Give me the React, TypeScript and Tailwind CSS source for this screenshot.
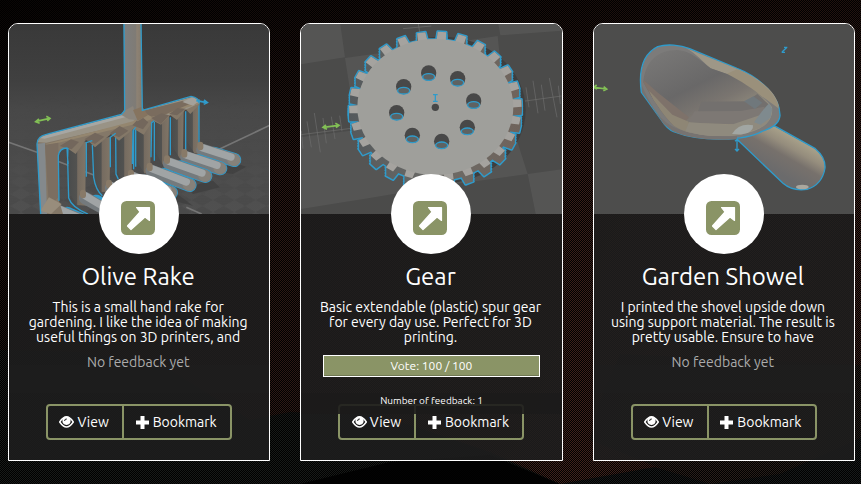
import type { ReactNode } from "react";

const BLUE = "#2f9bcb";

function gearPath(dy: number): string {
  const teeth = 26;
  const step = (Math.PI * 2) / teeth;
  const phase = (-85.6 * Math.PI) / 180;
  const point = (angle: number, scale: number) =>
    `${(437 + 259 * scale * Math.cos(angle)).toFixed(1)} ${(277 + 224 * scale * Math.sin(angle) + dy).toFixed(1)}`;
  const parts: string[] = [];
  for (let i = 0; i < teeth; i++) {
    const a = phase + i * step;
    parts.push(point(a - step * 0.25, 0.895), point(a - step * 0.2, 1), point(a + step * 0.2, 1), point(a + step * 0.25, 0.895));
  }
  return `M${parts.join("L")}Z`;
}

const holes = [
  [417, 177], [504, 194], [552, 261], [533, 340], [456, 382], [368, 364], [321, 296], [342, 218],
];

function Scene({ label, left, children }: { label: string; left: number; children: ReactNode }) {
  return (
    <svg role="img" aria-label={label} viewBox={`${left} 30 783 570`} preserveAspectRatio="xMidYMid slice" className="block h-[190px] w-full">
      {children}
    </svg>
  );
}

function RakeScene() {
  const tines = [
    { x: 205, y: 395, w: 54, b: 545 },
    { x: 278, y: 380, w: 54, b: 505 },
    { x: 348, y: 355, w: 50, b: 480 },
    { x: 408, y: 335, w: 46, b: 450 },
    { x: 464, y: 315, w: 44, b: 425 },
    { x: 514, y: 300, w: 38, b: 405 },
    { x: 558, y: 280, w: 40, b: 390 },
  ];
  const prongs = [
    [608, 408, 704, 438],
    [560, 430, 662, 463],
    [508, 449, 617, 486],
    [456, 471, 570, 513],
    [400, 492, 514, 536],
    [334, 522, 430, 575],
    [256, 552, 360, 610],
    [168, 588, 260, 625],
  ];
  return (
    <Scene label="Olive rake model" left={27}>
      <defs>
        <linearGradient id="rakeSky" x1="0" y1="0" x2="0" y2="1">
          <stop offset="0" stopColor="#393939" />
          <stop offset="0.3" stopColor="#404040" />
          <stop offset="0.45" stopColor="#484848" />
          <stop offset="1" stopColor="#505050" />
        </linearGradient>
        <linearGradient id="rakePole" x1="0" y1="0" x2="1" y2="0">
          <stop offset="0" stopColor="#7d7f80" />
          <stop offset="0.5" stopColor="#7f7b75" />
          <stop offset="0.55" stopColor="#8d8274" />
          <stop offset="1" stopColor="#7b7062" />
        </linearGradient>
        <linearGradient id="rakeTine" x1="0" y1="0" x2="1" y2="0">
          <stop offset="0" stopColor="#4a4c4c" />
          <stop offset="0.46" stopColor="#525250" />
          <stop offset="0.5" stopColor="#756b60" />
          <stop offset="1" stopColor="#827768" />
        </linearGradient>
        <pattern id="rakeFloor" width="64" height="36" patternUnits="userSpaceOnUse">
          <path d="M0 18L32 0L64 18L32 36Z" fill="#4a4a4a" />
        </pattern>
        <linearGradient id="floorFade" x1="0" y1="0" x2="0" y2="1">
          <stop offset="0.38" stopColor="#000" />
          <stop offset="1" stopColor="#fff" />
        </linearGradient>
        <mask id="floorMask"><rect x="27" y="30" width="783" height="570" fill="url(#floorFade)" /></mask>
      </defs>
      <rect x="27" y="30" width="783" height="570" fill="url(#rakeSky)" />
      <rect x="27" y="30" width="783" height="570" fill="url(#rakeFloor)" mask="url(#floorMask)" />
      <path d="M27 385L112 415M170 440L300 490M810 334L660 405M560 580L606 600" stroke="#757575" strokeWidth="5" />
      <path d="M620 420L740 458L700 480L640 470ZM580 540L660 520L640 500L560 520ZM440 470L520 560L580 575Z" fill="#3d3d3d" opacity=".7" />
      {tines.map((t) => (
        <path key={t.x} d={`M${t.x} ${t.y + 22}Q${t.x + 4} ${t.y} ${t.x + t.w} ${t.y - 12}L${t.x + t.w - 2} ${t.b}L${t.x + t.w + 4} ${t.b + 30}L${t.x + 26} ${t.b + 28}L${t.x + 3} ${t.b - 10}Z`} fill="url(#rakeTine)" />
      ))}
      <path d="M204 440L207 552Q216 580 265 600M278 392L282 490Q288 528 308 545M348 366L349 480L356 496M402 346V466M408 346V458M464 324V440M512 310V424M558 292V412M598 256V392" fill="none" stroke={BLUE} strokeWidth="4" />
      {prongs.map(([x1, y1, x2, y2]) => (
        <g key={x1} strokeLinecap="round" fill="none">
          <path d={`M${x1 + 34} ${y1 + 11}L${x2} ${y2}`} stroke={BLUE} strokeWidth="42" />
          <path d={`M${x1} ${y1}L${x2} ${y2}`} stroke="#747a7d" strokeWidth="37" />
          <path d={`M${x2 - 4} ${y2 - 2}L${x2} ${y2}`} stroke="#85817a" strokeWidth="35" />
          <path d={`M${x1} ${y1 - 7}L${x2 - 10} ${y2 - 9}`} stroke="#a0a4a5" strokeWidth="22" />
          <path d={`M${x1 - 6} ${y1 - 16}L${x1 - 6} ${y1 - 8}`} stroke="#887a68" strokeWidth="18" />
        </g>
      ))}
      <path d="M112 385L122 600H190L178 560L176 425Q178 404 202 402L228 420L260 376L286 400L334 360L358 380L402 344L432 362L460 320L484 332L512 304L532 318L558 286L572 300L599 272L596 256L578 248L428 289V285H374L365 303L140 362Q114 368 112 385Z" fill="#847868" />
      <path d="M114 384Q118 364 140 362L365 303L380 294L432 289L578 248L598 258L600 268L564 284L500 306L424 320L140 386Z" fill="#999386" />
      <path d="M135 374L390 306L368 303L140 362L120 372Z" fill="#a7a7a3" />
      <path d="M140 390L400 322L424 300L494 295L556 266L588 264L598 270L564 280L424 326L136 396Z" fill="#94866f" />
      <path d="M430 290L550 260L570 270L500 300L456 308L424 292Z" fill="#7a6c5e" />
      <path d="M548 264L580 249L598 261L580 275Z" fill="#a4a19a" />
      <path d="M112 390L136 386L142 600H123Z" fill="#84898c" />
      <path d="M136 392L176 386L178 548L148 578Z" fill="#7b6e61" />
      <path d="M122 590L148 550L186 570L154 600Z" fill="#988d7c" />
      <path d="M180 396L214 376L238 384L216 406L200 402ZM254 376L286 356L314 368L286 390ZM330 358L360 336L386 350L358 370ZM398 334L424 306L446 325L430 346ZM454 312L486 298L508 304L484 330ZM508 300L534 282L558 284L532 304Z" fill="#73675c" />
      <path d="M372 30H425L428 290L444 304L414 322L390 306L374 290Z" fill="url(#rakePole)" />
      <path d="M374 290L400 276L414 318L388 316L365 303Z" fill="#8b857c" />
      <path d="M400 288L428 278L444 302L414 320Z" fill="#86745f" />
      <path d="M373 30L375 290L365 301L140 361Q112 367 112 390L123 600M424 30L428 289L574 247Q598 250 598 268M178 560L176 425Q180 402 202 402L205 450M205 402L204 430M260 488L260 386L278 380M332 460V370L348 358M398 450L400 350L408 340M454 430L456 326L464 320" fill="none" stroke={BLUE} strokeWidth="4" />
      <path d="M110 322L150 313M118 315L108 323L120 328M140 307L151 313L143 321" stroke="#82bf55" strokeWidth="5" fill="none" />
      <path d="M590 260L622 266M613 258L623 266L612 271" stroke={BLUE} strokeWidth="5" fill="none" />
    </Scene>
  );
}

function GearScene() {
  return (
    <Scene label="Gear model" left={33}>
      <defs>
        <linearGradient id="gearSide" x1="0" y1="0" x2="1" y2="0">
          <stop offset="0" stopColor="#54595c" />
          <stop offset="0.5" stopColor="#6c6b67" />
          <stop offset="1" stopColor="#6f635b" />
        </linearGradient>
      </defs>
      <rect x="27" y="30" width="800" height="570" fill="#4b4b4a" />
      <path d="M27 30H152L166 130L27 152ZM626 30H824V50L632 64ZM166 132L394 100L624 66L644 260L714 480L454 516L240 552L200 350ZM27 370L200 348L240 552L27 586ZM714 480L824 465V600H738Z" fill="#555554" />
      <path d="M33 362L185 343M700 262L816 246M340 44L425 36M386 30L390 54" stroke="#6f6f6e" strokeWidth="2" />
      <path d="M35 350L40 404M52 322L65 400M74 297L92 415M100 312L110 388M125 308L136 375M150 305L157 352M709 220L718 280M730 200L745 298M755 212L766 290M779 192L802 310M806 215L812 270" stroke="#6e6e6e" strokeWidth="2" />
      <ellipse cx="456" cy="288" rx="252" ry="220" fill="#3e3e3e" />
      {[24, 16, 8, 0].map((dy) => (
        <path key={dy} d={gearPath(dy)} fill={BLUE} stroke={BLUE} strokeWidth="9" strokeLinejoin="round" />
      ))}
      {[24, 20, 16, 12, 8, 4, 0].map((dy) => (
        <path key={dy} d={gearPath(dy)} fill="url(#gearSide)" />
      ))}
      <path d={gearPath(0)} fill="#a5a39f" />
      <ellipse cx="437" cy="279" rx="234" ry="204" fill="#9f9f9b" />
      {holes.map(([x, y]) => (
        <g key={x}>
          <circle cx={x} cy={y} r="23" fill="#484848" />
          <path d={`M${x - 21} ${y + 10}Q${x} ${y - 8} ${x + 21} ${y + 10}Q${x} ${y + 34} ${x - 21} ${y + 10}Z`} fill="#68706f" />
          <ellipse cx={x} cy={y + 12} rx="18" ry="10" fill="#5e6262" stroke={BLUE} strokeWidth="4" />
        </g>
      ))}
      <circle cx="437" cy="280" r="11" fill="#474747" />
      <path d="M437 241V263M430 242H444M430 262H444" stroke={BLUE} strokeWidth="4" fill="none" />
      <path d="M101 340L147 334M109 333L100 340L112 346M137 328L148 334L139 341" stroke="#82bf55" strokeWidth="5" fill="none" />
    </Scene>
  );
}

function ShovelScene() {
  return (
    <Scene label="Garden shovel model" left={39}>
      <defs>
        <linearGradient id="handle" gradientUnits="userSpaceOnUse" x1="650" y1="365" x2="590" y2="470">
          <stop offset="0" stopColor="#aaa38b" />
          <stop offset="0.3" stopColor="#958d7d" />
          <stop offset="0.55" stopColor="#77716c" />
          <stop offset="1" stopColor="#6b6b6c" />
        </linearGradient>
        <linearGradient id="bowl" gradientUnits="userSpaceOnUse" x1="260" y1="110" x2="390" y2="370">
          <stop offset="0" stopColor="#777675" />
          <stop offset="0.45" stopColor="#696868" />
          <stop offset="0.7" stopColor="#7a7570" />
          <stop offset="1" stopColor="#999381" />
        </linearGradient>
        <clipPath id="bowlClip"><path d="M188 205C192 145 230 107 290 108C330 110 360 140 390 163L440 180C490 205 550 245 574 280C580 325 540 350 480 362C410 372 325 364 280 336C245 302 215 255 188 205Z" /></clipPath>
      </defs>
      <rect x="27" y="30" width="800" height="570" fill="#4d4d4c" />
      <g transform="translate(-11 0)">
        <path d="M480 376L618 508Q645 532 690 526Q736 512 744 462Q746 430 715 404L580 330Z" fill="url(#handle)" />
        <path d="M480 376L618 508Q645 532 690 526Q736 512 744 462Q746 430 715 404L590 334" fill="none" stroke={BLUE} strokeWidth="4" />
        <ellipse cx="676" cy="519" rx="19" ry="7" fill="#aaa79e" />
        <path d="M193 235C184 170 198 120 242 98C270 89 310 93 338 104L480 163C550 190 610 250 609 305C606 333 580 343 555 352C505 380 375 386 290 353Q270 344 256 322Z" fill="#7c7b7a" stroke={BLUE} strokeWidth="4" />
        <path d="M326 102L480 164C550 192 600 238 606 278C560 240 500 210 450 181L400 163C378 144 360 120 326 102Z" fill="#9e9787" />
        <path d="M480 166C552 194 600 242 606 284C560 250 500 210 448 180Z" fill="#9a907b" />
        <path d="M195 216C230 292 250 318 292 340Q360 372 480 366L480 376Q350 382 285 350L260 330L195 235Z" fill="#777371" />
      </g>
      <path d="M188 205C192 145 230 107 290 108C330 110 360 140 390 163L440 180C490 205 550 245 574 280C580 325 540 350 480 362C410 372 325 364 280 336C245 302 215 255 188 205Z" fill="url(#bowl)" />
      <g clipPath="url(#bowlClip)">
        <path d="M180 190L230 235L325 310L292 350L230 290Z" fill="#7e726a" />
        <path d="M205 230L275 302L340 330L318 374L250 330Z" fill="#8e8675" />
        <path d="M362 263L498 262L530 240L565 272L552 310L480 328L340 325Z" fill="#73706e" />
        <path d="M342 292L480 291L552 278L548 315L480 332L322 325Z" fill="#7d7874" />
        <path d="M325 325L450 333L548 300L580 330L450 370L310 362Z" fill="#8f8a7e" />
        <path d="M490 262L518 247L545 266L523 285Z" fill="#70787c" />
        <path d="M543 293L565 268L575 285L570 311L540 332L520 325Z" fill="#7f8a8e" />
        <path d="M454 360Q475 326 517 334Q520 350 492 362Z" fill="#a1a6a3" />
      </g>
      <path d="M469 377V410M463 382L469 376L475 382M463 405L469 411L475 405" stroke={BLUE} strokeWidth="4" fill="none" />
      <path d="M604 114L619 100M610 100H620M603 115H613" stroke={BLUE} strokeWidth="4" fill="none" />
      <path d="M40 220L77 225M48 213L39 220L49 225M69 218L78 225L68 230" stroke="#82bf55" strokeWidth="5" fill="none" />
    </Scene>
  );
}

function ShareIcon() {
  return (
    <svg viewBox="0 0 34 34" className="size-[34px]" aria-hidden="true">
      <rect width="34" height="34" rx="5.500" fill="#8a9466" />
      <path d="M15.500 6.500H28.500V19.500L24 16L10 28.500L6.500 25L19 11Z" fill="#fff" stroke="#fff" strokeWidth="1.200" strokeLinejoin="round" />
    </svg>
  );
}

function EyeIcon() {
  return (
    <svg viewBox="0 0 15 12" className="h-3 w-[15px]" aria-hidden="true">
      <path d="M.7 6C3.500 1.800 5.800.8 7.500.8S11.500 1.800 14.300 6C11.500 10 9.300 11 7.500 11S3.500 10 .7 6Z" fill="none" stroke="#fff" strokeWidth="1.500" />
      <circle cx="7.500" cy="4.800" r="4.100" fill="#fff" />
      <path d="M5.600 5A2 2 0 0 1 7.800 3" fill="none" stroke="#191919" strokeWidth="1" />
    </svg>
  );
}

function PlusIcon() {
  return (
    <svg viewBox="0 0 13 13" className="size-[13px]" aria-hidden="true">
      <path d="M4.500 0H8.500V4.500H13V8.500H8.500V13H4.500V8.500H0V4.500H4.500Z" fill="#fff" />
    </svg>
  );
}

type Model = { title: string; text: string; scene: ReactNode; votes?: number; feedback?: number };

const models: Model[] = [
  { title: "Olive Rake", text: "This is a small hand rake for gardening. I like the idea of making useful things on 3D printers, and", scene: <RakeScene /> },
  { title: "Gear", text: "Basic extendable (plastic) spur gear for every day use. Perfect for 3D printing.", scene: <GearScene />, votes: 100, feedback: 1 },
  { title: "Garden Showel", text: "I printed the shovel upside down using support material. The result is pretty usable. Ensure to have", scene: <ShovelScene /> },
];

function Card({ model }: { model: Model }) {
  return (
    <article className="overflow-hidden rounded-t-[10px] border border-white bg-[#1e1e1e]/85 pb-5 text-center">
      {model.scene}
      <div className="relative mx-auto -mt-10 flex size-20 items-center justify-center rounded-full bg-white">
        <a href="#share" aria-label={`Open ${model.title}`} className="mt-2 mr-0.5">
          <ShareIcon />
        </a>
      </div>
      <h2 className="mt-1.5 pr-0.5 text-2xl leading-[34px]">{model.title}</h2>
      <p className="mr-3.5 ml-3 mt-1.5 h-[45px] overflow-hidden text-sm leading-[15px]">{model.text}</p>
      <div className="relative z-10 h-[59px]">
        {model.votes === undefined ? (
          <>
            <p className="pt-2 pr-0.5 text-sm leading-[18px] text-[#ababab]">No feedback yet</p>
            <div className="-mt-1.5 h-7 bg-[#1e1e1e]/50" />
          </>
        ) : (
          <div className="pt-2.5">
            <div className="mx-[22px] border border-white bg-[#8a9466] text-xs leading-5 shadow-[inset_0_-1px_0_#6f7752]">
              Vote: {model.votes} / 100
            </div>
            <p className="mt-4 bg-[#1c1b1b]/90 pt-0.5 pb-2 text-[10px] leading-[11px]">Number of feedback: {model.feedback}</p>
          </div>
        )}
      </div>
      <div className="mx-auto flex h-9 w-[186px] rounded-[4px] border-2 border-[#8a9466] text-sm">
        <button className="flex w-[76px] items-center justify-center gap-[3px] border-r-2 border-[#8a9466] pr-0.5">
          <EyeIcon />
          View
        </button>
        <button className="flex flex-1 items-center justify-center gap-1 pr-0.5">
          <PlusIcon />
          Bookmark
        </button>
      </div>
    </article>
  );
}

export default function App() {
  return (
    <main className="relative min-h-screen overflow-hidden bg-[#351d18] bg-[linear-gradient(115deg,#140c0a_0%,#281713_25%,#301b16_50%,#42241d_75%,#351d18_100%)] pt-[23px] pr-1.5 pb-[23px] pl-2 font-['Ubuntu','Noto_Sans',sans-serif] text-white">
      <svg className="absolute inset-0 size-full" viewBox="0 0 861 484" preserveAspectRatio="none" aria-hidden="true">
        <path d="M0 350L80 352L170 370L250 420L290 412L380 415L490 452L560 484H0Z" fill="#181a18" />
        <path d="M590 440L600 400L620 354L861 365V484H700Z" fill="#1c1f1c" opacity=".55" />
        <path d="M560 484L655 467L710 484L780 474L861 438V484Z" fill="#171919" />
        <path d="M300 484L390 462L490 455L560 484Z" fill="#030303" />
      </svg>
      <div className="absolute inset-0 bg-[repeating-conic-gradient(#000_0deg_90deg,transparent_90deg_180deg)] bg-[length:2px_2px]" />
      <div className="absolute inset-x-0 top-0 h-40 bg-linear-to-b from-black/50 to-transparent" />
      <div className="relative grid grid-cols-3 items-start gap-[30px]">
        {models.map((model) => (
          <Card key={model.title} model={model} />
        ))}
      </div>
    </main>
  );
}
